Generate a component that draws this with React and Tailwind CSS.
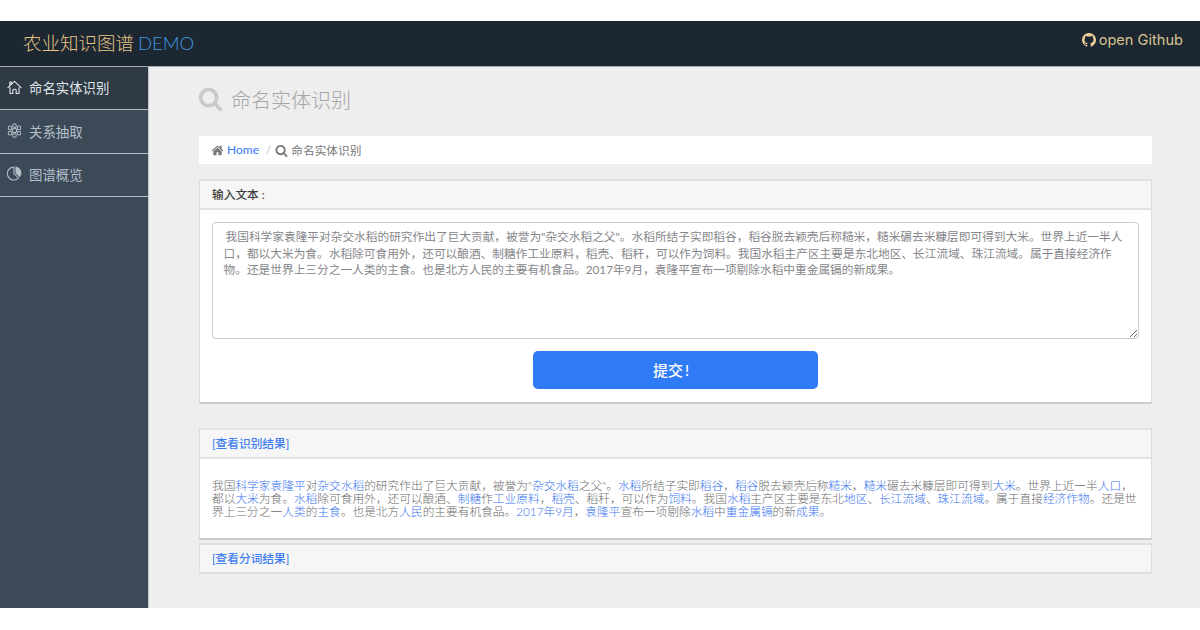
import React, { useState } from 'react';

const SAMPLE_TEXT = '我国科学家袁隆平对杂交水稻的研究作出了巨大贡献，被誉为"杂交水稻之父"。水稻所结子实即稻谷，稻谷脱去颖壳后称糙米，糙米碾去米糠层即可得到大米。世界上近一半人口，都以大米为食。水稻除可食用外，还可以酿酒、制糖作工业原料，稻壳、稻秆，可以作为饲料。我国水稻主产区主要是东北地区、长江流域、珠江流域。属于直接经济作物。还是世界上三分之一人类的主食。也是北方人民的主要有机食品。2017年9月，袁隆平宣布一项剔除水稻中重金属镉的新成果。';

// entities are wrapped in square brackets
const RESULT_LINES = [
    '我国[科学家][袁隆平]对[杂交水稻]的研究作出了巨大贡献，被誉为"[杂交水稻]之父"。[水稻]所结子实即[稻谷]，[稻谷]脱去颖壳后称[糙米]，[糙米]碾去米糠层即可得到[大米]。世界上近一半[人口]，',
    '都以[大米]为食。[水稻]除可食用外，还可以酿酒、[制糖]作[工业原料]，[稻壳]、稻秆，可以作为[饲料]。我国[水稻]主产区主要是东北[地区]、[长江流域]、[珠江流域]。属于直接[经济作物]。还是世',
    '界上三分之一[人类]的[主食]。也是北方[人民]的主要有机食品。[2017年9月]，[袁隆平]宣布一项剔除[水稻]中[重金属镉]的新[成果]。',
];

const SearchIcon = ({ className }) => (
    <svg viewBox="0 0 1792 1792" fill="currentColor" className={className}>
        <path d="M1216 832q0-185-131.5-316.5t-316.5-131.5-316.5 131.5-131.5 316.5 131.5 316.5 316.5 131.5 316.5-131.5 131.5-316.5zm512 832q0 52-38 90t-90 38q-54 0-90-38l-343-342q-179 124-399 124-143 0-273.5-55.5t-225-150-150-225-55.5-273.5 55.5-273.5 150-225 225-150 273.5-55.5 273.5 55.5 225 150 150 225 55.5 273.5q0 220-124 399l343 343q37 37 37 90z" />
    </svg>
);

const HomeIcon = ({ className }) => (
    <svg viewBox="0 0 1792 1792" fill="currentColor" className={className}>
        <path d="M1472 992v480q0 26-19 45t-45 19h-384v-384h-256v384h-384q-26 0-45-19t-19-45v-480q0-1 .5-3t.5-3l575-474 575 474q1 2 1 6zm223-69l-62 74q-8 9-21 11h-3q-13 0-21-7l-692-577-692 577q-12 8-24 7-13-2-21-11l-62-74q-8-10-7-23.5t11-21.5l719-599q32-26 76-26t76 26l244 204v-195q0-14 9-23t23-9h192q14 0 23 9t9 23v408l219 182q10 8 11 21.5t-7 23.5z" />
    </svg>
);

const GithubIcon = ({ className }) => (
    <svg viewBox="128 128 1536 1536" fill="currentColor" className={className}>
        <path d="M896 128q209 0 385.5 103t279.5 279.5 103 385.5q0 251-146.5 451.5t-378.5 277.5q-27 5-40-7t-13-30q0-3 .5-76.5t.5-134.5q0-97-52-142 57-6 102.5-18t94-39 81-66.5 53-105 20.5-150.5q0-119-79-206 37-91-8-204-28-9-81 11t-92 44l-38 24q-93-26-192-26t-192 26q-16-11-42.5-27t-83.5-38.5-85-13.5q-45 113-8 204-79 87-79 206 0 85 20.5 150t52.5 105 80.5 67 94 39 102.5 18q-39 36-49 103-21 10-45 15t-57 5-65.5-21.5-55.5-62.5q-19-32-48.5-52t-49.5-24l-20-3q-21 0-29 4.5t-5 11.5 9 14 13 12l7 5q22 10 43.5 38t31.5 51l10 23q13 38 44 61.5t67 30 69.5 7 55.5-3.5l23-4q0 38 .5 88.5t.5 54.5q0 18-13 30t-40 7q-232-77-378.5-277.5t-146.5-451.5q0-209 103-385.5t279.5-279.5 385.5-103z" />
    </svg>
);

const HouseAltIcon = ({ className }) => (
    <svg viewBox="0 0 16 16" fill="none" stroke="currentColor" strokeWidth="1.2" strokeLinecap="round" strokeLinejoin="round" className={className}>
        <path d="M1 8.2L8 1.5l7 6.7M3 6.2V2.2h1.6v2.4M3.2 8v6.4h3v-3.6q0-1 1-1h1.6q1 0 1 1v3.6h3V8" />
    </svg>
);

const GeniusIcon = ({ className }) => (
    <svg viewBox="0 0 16 16" fill="none" stroke="currentColor" strokeWidth="1.1" className={className}>
        <circle cx="8" cy="8" r="2.3" />
        <circle cx="8" cy="2.8" r="1.9" />
        <circle cx="8" cy="13.2" r="1.9" />
        <circle cx="3.2" cy="5.2" r="1.9" />
        <circle cx="12.8" cy="5.2" r="1.9" />
        <circle cx="3.2" cy="10.8" r="1.9" />
        <circle cx="12.8" cy="10.8" r="1.9" />
    </svg>
);

const PieIcon = ({ className }) => (
    <svg viewBox="0 0 16 16" fill="none" stroke="currentColor" strokeWidth="1.1" className={className}>
        <path d="M7.4 1A7 7 0 1 0 12.3 13L7.4 8Z" />
        <path d="M9 0.5A7 7 0 0 1 13.6 12L9 7.4Z" fill="currentColor" stroke="none" />
    </svg>
);

const menu = [
    { label: '命名实体识别', icon: HouseAltIcon, active: true },
    { label: '关系抽取', icon: GeniusIcon },
    { label: '图谱概览', icon: PieIcon },
];

const ResultLine = ({ line }) => (
    <p className="whitespace-nowrap">
        {line.split(/(\[[^\]]+\])/).filter(Boolean).map((part, i) =>
            part[0] === '[' ? (
                <a key={i} className="text-[#3a74f0]">{part.slice(1, -1)}</a>
            ) : (
                <span key={i}>{part}</span>
            )
        )}
    </p>
);

const App = () => {
    const [text, setText] = useState(SAMPLE_TEXT);

    return (
        <div className="h-[630px] overflow-hidden bg-white pt-[21px] font-['Lato','Noto_Sans_CJK_SC',sans-serif] text-[11.7px] text-[#797979]">
            <header className="flex h-[46px] justify-between border-b border-[#a3abb2] bg-[#1c2731] pl-[23px] pr-[17px]">
                <h1 className="flex gap-1 pt-[8px] text-[18.5px] font-light leading-7">
                    <span className="text-[#e5c583]">农业知识图谱</span>
                    <span className="text-[#3f9be0]">DEMO</span>
                </h1>
                <a className="flex items-center gap-[3px] self-start pt-[9px] font-['Inter',sans-serif] text-[14.6px] leading-5 text-[#d6c391]">
                    <GithubIcon className="size-[14px] text-[#edcf98]" />
                    open Github
                </a>
            </header>

            <div className="flex h-[541px]">
                <aside className="w-[149px] border-r border-[#c3c9cf] bg-[#3c4a57]">
                    {menu.map(({ label, icon: Icon, active }) => (
                        <a
                            key={label}
                            className={`flex h-[43.4px] items-center gap-[7px] border-b border-[#b3bac1] pl-[7px] text-[13.4px] ${active ? 'bg-[#2f3a45] text-[#dfe4e8]' : 'text-[#b4bfca]'}`}
                        >
                            <Icon className="mb-[2px] size-[15px]" />
                            <span>{label}</span>
                        </a>
                    ))}
                </aside>

                <main className="flex-1 bg-[#eeeeee] pl-[50px] pr-12 pt-[19px]">
                    <h3 className="-ml-px flex h-7 items-center gap-2 text-[20px] font-light text-[#a5a5a5]">
                        <SearchIcon className="mb-1 size-[25px] text-[#c9c9c9]" />
                        命名实体识别
                    </h3>

                    <div className="mt-[22px] flex h-[28px] items-center bg-white pl-3">
                        <HomeIcon className="size-[13px]" />
                        <a className="ml-[3px] text-[12px] text-[#3478f6]">Home</a>
                        <span className="ml-[7px] mr-[4px] text-[#bbbbbb]">/</span>
                        <SearchIcon className="mr-[3px] size-[13px]" />
                        <span className="pt-px">命名实体识别</span>
                    </div>

                    <section className="mt-[15px] h-[225px] border-x border-b-2 border-x-[#dcdcdc] border-b-[#cbcbcb] bg-white">
                        <div className="flex h-[31px] items-center border-y-2 border-[#e2e2e2] bg-[#f6f6f6] pl-3 pt-px font-medium text-[#3c3c3c]">
                            输入文本 :
                        </div>
                        <div className="px-3 pt-3">
                            <textarea
                                value={text}
                                onChange={(e) => setText(e.target.value)}
                                className="block h-[117px] w-full rounded-[4px] border border-[#cccccc] px-[10.5px] py-[5px] indent-[2px] text-[11.705px] leading-[16.7px] text-[#86868a]"
                            />
                            <button className="mx-auto mt-3 block h-[38px] w-[285px] rounded-[5px] bg-[#2f7bf6] pr-[9px] text-[15px] font-medium text-white">
                                提交<span className="ml-0.5">!</span>
                            </button>
                        </div>
                    </section>

                    <section className="mt-[24px] h-[112px] border-x border-b-2 border-x-[#dcdcdc] border-b-[#cbcbcb] bg-white">
                        <div className="flex h-[31px] items-center border-y-2 border-[#e2e2e2] bg-[#f6f6f6] pl-3 pt-px font-medium text-[#3f7df0]">
                            [查看识别结果]
                        </div>
                        <div className="pl-3 pt-[20.4px] text-[11.71px] font-light leading-[12.6px] text-[#6c6c6c]">
                            {RESULT_LINES.map((line, i) => (
                                <ResultLine key={i} line={line} />
                            ))}
                        </div>
                    </section>

                    <section className="mt-[3px] flex h-[31px] items-center border-2 border-x border-[#dfdfdf] bg-[#f6f6f6] pl-3 font-medium text-[#3f7df0]">
                        [查看分词结果]
                    </section>
                </main>
            </div>
        </div>
    );
};

export default App;
